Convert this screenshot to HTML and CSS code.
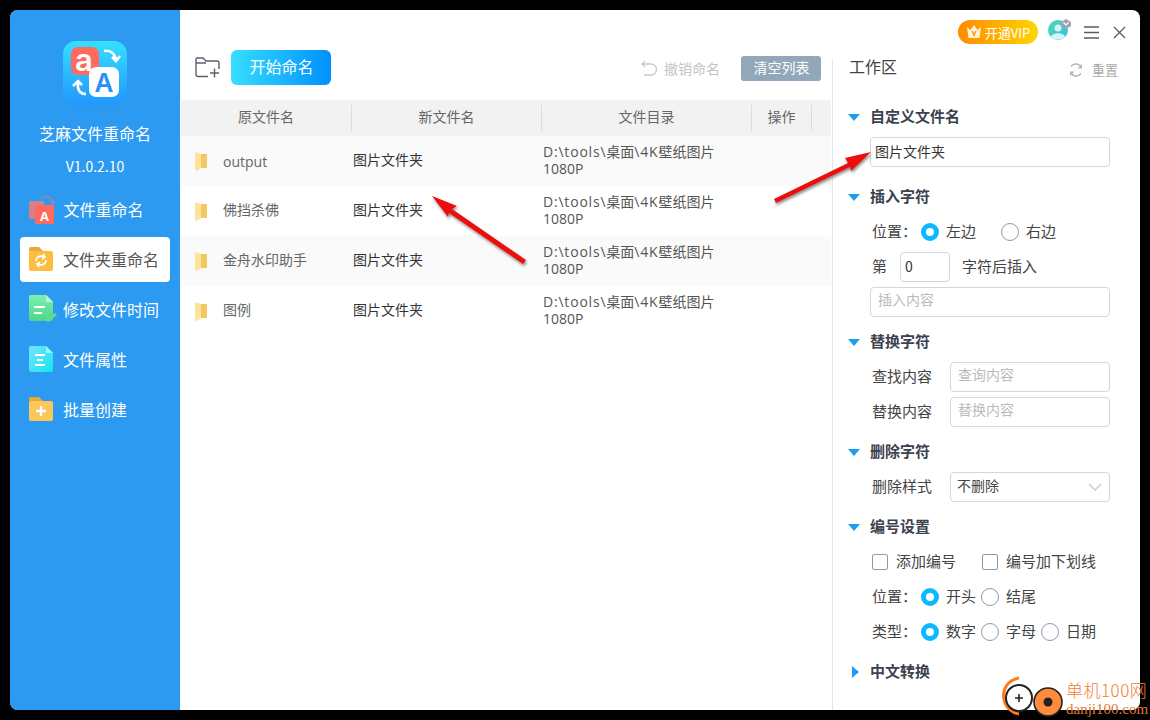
FILE: index.html
```html
<!DOCTYPE html>
<html lang="zh">
<head>
<meta charset="utf-8">
<title>芝麻文件重命名</title>
<link rel="stylesheet" href="styles.css">
</head>
<body>
<div class="app">
  <aside class="side">
    <svg class="logo" width="64" height="64" viewBox="0 0 64 64">
      <defs><linearGradient id="lg" x1="0" y1="0" x2="0" y2="1"><stop offset="0" stop-color="#35e0ff"/><stop offset="1" stop-color="#2196ff"/></linearGradient></defs>
      <rect width="64" height="64" rx="13" fill="url(#lg)"/>
      <rect x="8" y="6" width="28" height="28" rx="7" fill="#ff6a5c"/>
      <rect x="26" y="26" width="30" height="30" rx="7" fill="#fff"/>
      <text x="21" y="30" class="logo-a">a</text>
      <text x="41" y="51" class="logo-b">A</text>
      <path d="M41 10c6-1 11 2 12 9M49 16l4 4 4-5" fill="none" stroke="#fff" stroke-width="2.6"/>
      <path d="M23 53c-6 0-9-4-8-11M10 45l5-5 4 4" fill="none" stroke="#fff" stroke-width="2.6"/>
    </svg>
    <div class="app-name">芝麻文件重命名</div>
    <div class="app-ver">V1.0.2.10</div>
    <nav class="nav">
      <div class="nav-item">
        <svg class="nav-icon" width="30" height="30" viewBox="0 0 30 30">
          <rect x="1" y="7" width="15" height="18" rx="1.5" fill="#d67f8a"/>
          <rect x="7" y="11" width="19" height="19" rx="1.5" fill="#ff6a5c"/>
          <path d="M13 4c5-3 10-1 12 4M22 7l3 3 2-3" fill="none" stroke="#8d8bb4" stroke-width="1.6"/>
          <text x="16.5" y="27" class="ni-a">A</text>
        </svg>
        <span class="nav-label nudge">文件重命名</span>
      </div>
      <div class="nav-item active">
        <svg class="nav-icon" width="30" height="26" viewBox="0 0 30 26">
          <path d="M1 3a2 2 0 0 1 2-2h8l4 4H1z" fill="#e8a83a"/>
          <rect x="1" y="5" width="24" height="20" rx="2" fill="#fcbd40"/>
          <path d="M8 15c0-4 4-6 8-4M15 8l2 3-3 2M18 14c0 4-4 6-8 4M11 21l-2-3 3-2" fill="none" stroke="#fff" stroke-width="1.800"/>
        </svg>
        <span class="nav-label">文件夹重命名</span>
      </div>
      <div class="nav-item">
        <svg class="nav-icon" width="30" height="30" viewBox="0 0 30 30">
          <defs><linearGradient id="lg2" x1="0" y1="0" x2="0" y2="1"><stop offset="0" stop-color="#7eefb0"/><stop offset="1" stop-color="#4fd58a"/></linearGradient></defs>
          <path d="M3 1h15l7 7v17a2 2 0 0 1-2 2H3a2 2 0 0 1-2-2V3a2 2 0 0 1 2-2z" fill="url(#lg2)"/>
          <path d="M18 1l7 7h-7z" fill="#b9f5d4"/>
          <path d="M6 13h11M6 19h8" stroke="#fff" stroke-width="2.2"/>
          <path d="M19 27l9-7" stroke="#5edc95" stroke-width="3"/>
        </svg>
        <span class="nav-label">修改文件时间</span>
      </div>
      <div class="nav-item">
        <svg class="nav-icon" width="30" height="28" viewBox="0 0 30 28">
          <defs><linearGradient id="lg3" x1="0" y1="0" x2="1" y2="1"><stop offset="0" stop-color="#75e3ff"/><stop offset="1" stop-color="#14e4ee"/></linearGradient></defs>
          <path d="M3 1h15l7 7v17a2 2 0 0 1-2 2H3a2 2 0 0 1-2-2V3a2 2 0 0 1 2-2z" fill="url(#lg3)"/>
          <path d="M18 1l7 7h-7z" fill="#a6f1ff"/>
          <path d="M7 10h10M9 15h6M7 20h10" stroke="#fff" stroke-width="2"/>
        </svg>
        <span class="nav-label">文件属性</span>
      </div>
      <div class="nav-item">
        <svg class="nav-icon" width="30" height="26" viewBox="0 0 30 26">
          <path d="M1 3a2 2 0 0 1 2-2h8l4 4H1z" fill="#e8a83a"/>
          <rect x="1" y="5" width="24" height="20" rx="2" fill="#fdc65a"/>
          <path d="M8 15h10M13 10v10" stroke="#fff" stroke-width="2.4"/>
        </svg>
        <span class="nav-label">批量创建</span>
      </div>
    </nav>
  </aside>

  <div class="main">
    <header class="titlebar">
      <div class="vip">
        <svg width="16" height="14" viewBox="0 0 16 14"><path d="M1 2l3.500 3L8 0l3.500 5L15 2l-1.500 11h-11z" fill="#fff3d6"/><path d="M6 6l2 4 2-4" fill="none" stroke="#ff9a10" stroke-width="1.500"/></svg>
        <span>开通VIP</span>
      </div>
      <svg class="avatar" width="24" height="22" viewBox="0 0 24 22">
        <defs><linearGradient id="lg4" x1="0" y1="0" x2="1" y2="1"><stop offset="0" stop-color="#55d6a8"/><stop offset="1" stop-color="#28c6e8"/></linearGradient></defs>
        <circle cx="10" cy="11" r="10" fill="url(#lg4)"/>
        <circle cx="10" cy="9" r="3.500" fill="#d8f4fa"/>
        <path d="M3 18c1-5 13-5 14 0a10 10 0 0 1-14 0z" fill="#d8f4fa"/>
        <path d="M18 0l5 3v4l-5 3-5-3V3z" fill="#9ba3b8"/>
        <path d="M15.500 3.500l2.500 2.500 2.500-2.500" fill="none" stroke="#fff" stroke-width="1.200"/>
      </svg>
      <svg class="tb-menu" width="15" height="13" viewBox="0 0 15 13"><path d="M0 1h15M0 6.500h15M0 12h15" stroke="#555c66" stroke-width="1.300"/></svg>
      <svg class="tb-close" width="13" height="13" viewBox="0 0 13 13"><path d="M1 1l11 11M12 1L1 12" stroke="#555c66" stroke-width="1.300"/></svg>
    </header>

    <div class="content">
      <section class="list">
        <div class="toolbar">
          <svg class="add-folder" width="25" height="21" viewBox="0 0 25 21"><path d="M13 19.500H3a2 2 0 0 1-2-2V2.500a1.500 1.500 0 0 1 1.500-1.500H8l3 3h11a2 2 0 0 1 2 2v6M1 6h10" fill="none" stroke="#5a606c" stroke-width="1.400"/><path d="M15 16h9M19.500 11.500v9" stroke="#5a606c" stroke-width="1.400"/></svg>
          <button class="start">开始命名</button>
          <div class="undo">
            <svg width="16" height="16" viewBox="0 0 16 16"><path d="M4 1L1 4l3 3M1 4h9a5 5 0 0 1 0 11H3" fill="none" stroke="#c9c9c9" stroke-width="1.400"/></svg>
            <span>撤销命名</span>
          </div>
          <button class="clear">清空列表</button>
        </div>
        <div class="thead">
          <div class="th">原文件名</div>
          <div class="th">新文件名</div>
          <div class="th">文件目录</div>
          <div class="th">操作</div>
          <div class="th"></div>
        </div>
        <div class="tr odd">
          <div class="td-name"><svg class="fold" width="13" height="19" viewBox="0 0 13 19"><path d="M4 2h8v14H4z" fill="#f3c862"/><path d="M0 0l6 2v14l-4 3-2-1z" fill="#fde39c"/></svg><span class="latin">output</span></div>
          <div class="td-new">图片文件夹</div>
          <div class="td-dir"><span class="dl">D:\tools\</span>桌面<span class="dl">\4K</span>壁纸图片<br>1080P</div>
        </div>
        <div class="tr">
          <div class="td-name"><svg class="fold" width="13" height="19" viewBox="0 0 13 19"><path d="M4 2h8v14H4z" fill="#f3c862"/><path d="M0 0l6 2v14l-4 3-2-1z" fill="#fde39c"/></svg><span>佛挡杀佛</span></div>
          <div class="td-new">图片文件夹</div>
          <div class="td-dir"><span class="dl">D:\tools\</span>桌面<span class="dl">\4K</span>壁纸图片<br>1080P</div>
        </div>
        <div class="tr odd">
          <div class="td-name"><svg class="fold" width="13" height="19" viewBox="0 0 13 19"><path d="M4 2h8v14H4z" fill="#f3c862"/><path d="M0 0l6 2v14l-4 3-2-1z" fill="#fde39c"/></svg><span>金舟水印助手</span></div>
          <div class="td-new">图片文件夹</div>
          <div class="td-dir"><span class="dl">D:\tools\</span>桌面<span class="dl">\4K</span>壁纸图片<br>1080P</div>
        </div>
        <div class="tr">
          <div class="td-name"><svg class="fold" width="13" height="19" viewBox="0 0 13 19"><path d="M4 2h8v14H4z" fill="#f3c862"/><path d="M0 0l6 2v14l-4 3-2-1z" fill="#fde39c"/></svg><span>图例</span></div>
          <div class="td-new">图片文件夹</div>
          <div class="td-dir"><span class="dl">D:\tools\</span>桌面<span class="dl">\4K</span>壁纸图片<br>1080P</div>
        </div>
      </section>

      <section class="panel">
        <div class="panel-head">
          <span class="panel-title">工作区</span>
          <div class="reset">
            <svg width="14" height="14" viewBox="0 0 14 14"><path d="M12.500 5A6 6 0 0 0 2 3.500M1.500 9A6 6 0 0 0 12 10.500" fill="none" stroke="#b5b5b5" stroke-width="1.500"/><path d="M13 1v4.500H8.500zM1 13V8.500h4.500z" fill="#b5b5b5"/></svg>
            <span>重置</span>
          </div>
        </div>

        <div class="sec sec-first">
          <div class="sec-title"><i class="tri"></i>自定义文件名</div>
          <div class="field wide val">图片文件夹</div>
        </div>

        <div class="sec">
          <div class="sec-title"><i class="tri"></i>插入字符</div>
          <div class="row">
            <span class="lbl">位置：</span>
            <i class="radio on"></i><span class="opt w-insert">左边</span>
            <i class="radio"></i><span class="opt">右边</span>
          </div>
          <div class="line">
            <span class="lbl lbl-di">第</span>
            <div class="field tiny val">0</div>
            <span class="lbl">字符后插入</span>
          </div>
          <div class="field wide ph">插入内容</div>
        </div>

        <div class="sec">
          <div class="sec-title"><i class="tri"></i>替换字符</div>
          <div class="line"><span class="lbl lbl-field">查找内容</span><div class="field mid ph">查询内容</div></div>
          <div class="line"><span class="lbl lbl-field">替换内容</span><div class="field mid ph">替换内容</div></div>
        </div>

        <div class="sec">
          <div class="sec-title"><i class="tri"></i>删除字符</div>
          <div class="line">
            <span class="lbl lbl-field">删除样式</span>
            <div class="field mid sel"><span>不删除</span><svg width="14" height="8" viewBox="0 0 14 8"><path d="M1 1l6 6 6-6" fill="none" stroke="#c5d0da" stroke-width="1.600"/></svg></div>
          </div>
        </div>

        <div class="sec">
          <div class="sec-title"><i class="tri"></i>编号设置</div>
          <div class="row">
            <i class="check"></i><span class="opt w-check">添加编号</span>
            <i class="check"></i><span class="opt">编号加下划线</span>
          </div>
          <div class="row">
            <span class="lbl">位置：</span>
            <i class="radio on"></i><span class="opt">开头</span>
            <i class="radio"></i><span class="opt">结尾</span>
          </div>
          <div class="row">
            <span class="lbl">类型：</span>
            <i class="radio on"></i><span class="opt">数字</span>
            <i class="radio"></i><span class="opt">字母</span>
            <i class="radio"></i><span class="opt">日期</span>
          </div>
        </div>

        <div class="sec">
          <div class="sec-title"><i class="tri right"></i>中文转换</div>
        </div>
      </section>
    </div>
  </div>
</div>

<svg class="arrows" width="1150" height="720" viewBox="0 0 1150 720">
  <defs><filter id="sh" x="-20%" y="-20%" width="140%" height="140%"><feDropShadow dx="1" dy="2" stdDeviation="1.500" flood-color="#555" flood-opacity=".7"/></filter></defs>
  <g filter="url(#sh)" fill="#ec0a0d">
    <path d="M432 196l25 10-5 3 74 51-3 4-74-51-1 4z"/>
    <path d="M871 152l-26 6 3 5-74 36 2 4 74-36 1 4z"/>
  </g>
</svg>

<div class="mark">
  <svg width="62" height="42" viewBox="0 0 62 42">
    <path d="M17 2C6 4 0 13 2 23c1 8 8 14 15 15" fill="none" stroke="#ff7a1a" stroke-width="3"/>
    <circle cx="17" cy="22" r="13" fill="#fff" stroke="#222" stroke-width="2"/>
    <path d="M13 22h8M17 18v8" stroke="#222" stroke-width="1.600"/>
    <circle cx="46" cy="26" r="14" fill="#ff8c3c" stroke="#222" stroke-width="1.600"/>
    <circle cx="46" cy="26" r="4.500" fill="#222"/>
  </svg>
  <div class="mark-text">
    <div class="mark-cn">单机100网</div>
    <div class="mark-en">danji100.com</div>
  </div>
</div>
</body>
</html>
```
FILE: styles.css
```css
* { box-sizing: border-box; }
html, body { margin: 0; height: 720px; overflow: hidden; }
body {
  background: #000;
  padding: 10px;
  font-family: "Noto Sans CJK SC", "Noto Sans", sans-serif;
  font-size: 14px;
  color: #333;
}
i { display: block; font-style: normal; }
button { font: inherit; border: 0; padding: 0 0 3px 1px; color: #fff; }

.app {
  display: flex;
  height: 700px;
  background: #fff;
  border-radius: 8px;
  overflow: hidden;
}

/* sidebar */
.side {
  width: 170px;
  flex: none;
  background: #2b9af0;
  color: #fff;
  display: flex;
  flex-direction: column;
  align-items: center;
  padding-top: 31px;
}
.logo { display: block; }
.logo-a { font: 600 31px "Inter", sans-serif; fill: #fff; text-anchor: middle; }
.logo-b { font: 600 26px "Inter", sans-serif; fill: #2b8ff5; text-anchor: middle; }
.ni-a { font: 700 13px "Open Sans", sans-serif; fill: #fff; text-anchor: middle; }
.app-name { font-size: 16px; line-height: 22px; margin-top: 17px; }
.app-ver { font-size: 14px; line-height: 20px; margin-top: 12px; }
.nav {
  width: 150px;
  margin-top: 11px;
  display: flex;
  flex-direction: column;
  gap: 5px;
}
.nav-item {
  height: 45px;
  display: flex;
  align-items: center;
  padding: 0 0 1px 8px;
  border-radius: 4px;
  font-size: 16px;
}
.nav-item.active { background: #fff; color: #555; }
.nav-icon { flex: none; display: block; }
.nav-label { margin-left: 5px; white-space: nowrap; }
.nudge { margin-left: 5.500px; }

/* main */
.main { flex: 1; min-width: 0; display: flex; flex-direction: column; }
.titlebar {
  height: 40px;
  flex: none;
  display: flex;
  align-items: center;
  justify-content: flex-end;
  padding: 4px 14px 0 0;
}
.vip {
  width: 80px;
  height: 24px;
  border-radius: 12px;
  background: linear-gradient(90deg, #ff8a00, #ffd400);
  color: #fff;
  font-size: 13px;
  display: flex;
  align-items: center;
  justify-content: center;
  gap: 3px;
}
.avatar { margin-left: 10px; margin-top: -4px; }
.tb-menu { margin-left: 12px; }
.tb-close { margin-left: 14px; }

.content { flex: 1; display: flex; min-height: 0; }
.list { width: 652px; flex: none; }
.toolbar {
  height: 35px;
  display: flex;
  align-items: center;
  padding-left: 15px;
  margin-bottom: 15px;
}
.add-folder { flex: none; }
.start {
  width: 100px;
  height: 35px;
  margin-left: 11px;
  border-radius: 6px;
  background: linear-gradient(90deg, #36deff, #0090ff);
  font-size: 16px;
}
.undo {
  margin-left: auto;
  display: flex;
  align-items: center;
  gap: 7px;
  color: #c4c4c4;
  font-size: 14px;
}
.clear {
  width: 80px;
  height: 25px;
  margin: 2px 11px 0 21px;
  border-radius: 3px;
  background: #92a7b9;
  font-size: 14px;
}

.thead, .tr {
  display: grid;
  grid-template-columns: 171px 190px 210px 60px 19px;
  margin-left: 1px;
  width: 650px;
}
.thead { height: 36px; background: #f2f2f2; align-items: center; }
.th {
  height: 26px;
  line-height: 22px;
  text-align: center;
  color: #666;
  border-right: 1px solid #dcdcdc;
}
.th:last-child { border-right: 0; }
.tr { height: 50px; align-items: center; background: #fff; }
.tr.odd { background: #fafafa; }
.td-name {
  display: flex;
  align-items: center;
  padding-left: 14px;
  gap: 15px;
  color: #666;
  line-height: 20px;
}
.td-name span { margin-top: -4px; }
.td-name .latin { margin-top: 2px; font-family: "Open Sans", sans-serif; }
.fold { flex: none; margin-top: 1px; }
.td-new { padding-left: 1px; color: #333; line-height: 20px; margin-top: -4px; }
.td-dir {
  padding-left: 1px;
  color: #555;
  line-height: 17px;
  margin-top: -2px;
  grid-column: span 3;
  font-family: "Open Sans", "Noto Sans CJK SC", sans-serif;
}
.dl { letter-spacing: .8px; }

/* panel */
.panel {
  flex: 1;
  margin-top: 10px;
  border-left: 1px solid #d8e8f4;
  padding: 0 30px 0 16px;
}
.panel-head {
  height: 36px;
  margin-bottom: 10px;
  display: flex;
  align-items: flex-start;
  justify-content: space-between;
}
.panel-title { font-size: 16px; line-height: 12px; color: #444; }
.reset { display: flex; align-items: center; gap: 9px; margin: 3px -8px 0 0; color: #aaa; font-size: 13px; line-height: 14px; }

.sec { display: flow-root; margin-bottom: 9px; padding-left: 21px; position: relative; font-size: 15px; }
.sec-first { margin-bottom: 14px; }
.sec-title {
  height: 20px;
  line-height: 19px;
  font-weight: 700;
  color: #3c4250;
  margin-bottom: 11px;
}
.tri {
  position: absolute;
  left: -1px;
  top: 8px;
  width: 0;
  height: 0;
  border-style: solid;
  border-width: 7px 6px 0;
  border-color: #1f9bf5 transparent transparent;
}
.tri.right {
  left: 3px;
  top: 5px;
  border-width: 6px 0 6px 7px;
  border-color: transparent transparent transparent #1f9bf5;
}
.row {
  height: 28px;
  margin-bottom: 7px;
  display: flex;
  align-items: center;
  padding-left: 2px;
}
.line { display: flex; align-items: center; margin-bottom: 5px; }
.lbl { color: #444; white-space: nowrap; }
.line .lbl { margin-top: -4px; }
.row .lbl, .opt { margin-top: -2px; }
.lbl-field { width: 80px; padding-left: 2px; }
.lbl-di { width: 30px; padding-left: 2px; }
.field {
  height: 30px;
  border: 1px solid #ccd9e2;
  border-radius: 4px;
  display: flex;
  align-items: center;
  padding: 0 4px 4px;
  line-height: 20px;
  background: #fff;
  margin-bottom: 5px;
  font-size: 14px;
}
.line .field { margin-bottom: 0; }
.wide { width: 240px; }
.mid { width: 160px; padding-left: 7px; }
.tiny { width: 50px; margin-right: 12px; }
.val { color: #333; padding-bottom: 2px; }
.ph { color: #bbb; padding-left: 7px; padding-bottom: 7px; }
.sel { justify-content: space-between; padding: 0 7px 0 6px; color: #444; }
.sel span { margin-top: -4px; }
.radio {
  width: 18px;
  height: 18px;
  flex: none;
  border: 1px solid #8f97ab;
  border-radius: 50%;
  margin: 2px 7px 0 0;
}
.radio.on { border: 5.500px solid #0cb8ff; }
.row .lbl { width: 49px; }
.opt { color: #444; white-space: nowrap; margin-right: 5px; }
.w-insert { margin-right: 25px; }
.check {
  width: 16px;
  height: 16px;
  flex: none;
  border: 1px solid #8f97ab;
  border-radius: 2px;
  margin: 2px 8px 0 0;
}
.w-check { margin-right: 26px; }

/* overlays on top of the screenshot */
.arrows { position: absolute; left: 0; top: 0; pointer-events: none; }
.mark {
  position: absolute;
  left: 1002px;
  top: 676px;
  display: flex;
  align-items: flex-start;
  gap: 2px;
}
.mark-text { font-family: "Liberation Serif", "Noto Sans CJK SC", serif; white-space: nowrap; color: #f08036; }
.mark-cn { font-size: 17px; line-height: 24px; margin-top: 2px; letter-spacing: .5px; font-family: "Noto Sans CJK SC", sans-serif; font-weight: 300; }
.mark-en { font-size: 15px; line-height: 16px; margin-top: -1px; color: #e0762f; }
```
